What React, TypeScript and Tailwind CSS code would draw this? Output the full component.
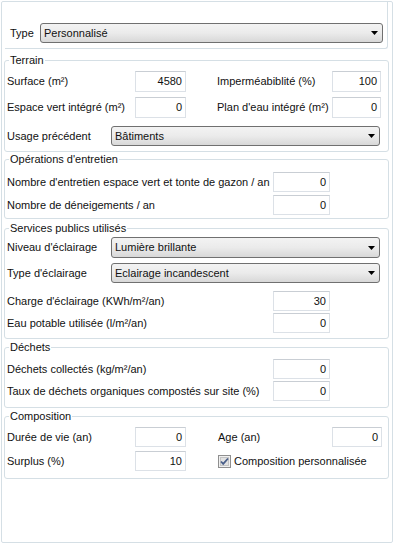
import type { ReactNode } from 'react';

const font = { fontFamily: '"Liberation Sans", Arial, sans-serif' };

function Field({ value, w }: { value: string; w: string }) {
  return (
    <div
      className={`${w} flex h-full items-center justify-end border border-[#dce1e7] border-t-[#c9ced4] bg-white pr-[3px]`}
    >
      {value}
    </div>
  );
}

function Select({ value, w, h }: { value: string; w: string; h: string }) {
  return (
    <div
      className={`${w} ${h} flex items-center justify-between rounded-[3px] border border-[#707070] bg-gradient-to-b from-[#f3f3f3] via-[#ebebeb] to-[#d8d8d8] pl-[3px] pr-[4px]`}
    >
      <span>{value}</span>
      <svg width="7" height="4" viewBox="0 0 7 4">
        <path d="M0 0h7L3.5 4z" fill="#000" />
      </svg>
    </div>
  );
}

function Group({ title, className, children }: { title: string; className: string; children: ReactNode }) {
  return (
    <fieldset className={`ml-[2px] w-[385px] rounded-[3px] border border-[#d5dfe5] ${className}`}>
      <legend className="ml-[4px] px-[1px] leading-[13px]">{title}</legend>
      <div className="flex flex-col pl-[2px]">{children}</div>
    </fieldset>
  );
}

function Checkbox() {
  return (
    <svg width="13" height="13" viewBox="0 0 13 13">
      <rect x="0.5" y="0.5" width="12" height="12" fill="#f0f0f0" stroke="#8f8f8f" />
      <rect x="2.5" y="2.5" width="8" height="8" fill="#e2e2e2" stroke="#c4c4c4" />
      <path d="M3 6.5l2.2 2.4L10 3.5" fill="none" stroke="#4a5f8a" strokeWidth="1.8" />
    </svg>
  );
}

export default function App() {
  return (
    <div className="pl-[1px] pt-[1px] text-[11px] leading-[13px] text-[#111]" style={font}>
      <div className="h-[542px] w-[392px] rounded-[2px] border border-[#d5dfe5] bg-white">
        <div className="ml-[3px] flex h-[47px] w-[383px] items-start rounded-br-[3px] border-r border-b border-[#d5dfe5] pt-[21px]">
          <span className="ml-[5px] flex h-[20px] w-[30px] items-center">Type</span>
          <Select value="Personnalisé" w="w-[343px]" h="h-[20px]" />
        </div>

        <Group title="Terrain" className="mt-[5px] pb-[5px]">
          <div className="mt-[4px] flex h-[21px] items-center">
            <span className="w-[128px]">Surface (m²)</span>
            <Field value="4580" w="w-[51px]" />
            <span className="ml-[31px] w-[115px]">Imperméabiblité (%)</span>
            <Field value="100" w="w-[49px]" />
          </div>
          <div className="mt-[5px] flex h-[21px] items-center">
            <span className="w-[128px]">Espace vert intégré (m²)</span>
            <Field value="0" w="w-[51px]" />
            <span className="ml-[31px] w-[115px]">Plan d'eau intégré (m²)</span>
            <Field value="0" w="w-[49px]" />
          </div>
          <div className="mt-[8px] flex h-[20px] items-center">
            <span className="w-[104px]">Usage précédent</span>
            <Select value="Bâtiments" w="w-[269px]" h="h-[20px]" />
          </div>
        </Group>

        <Group title="Opérations d'entretien" className="mt-[1px] pb-[3px]">
          <div className="mt-[6px] flex h-[20px] items-center">
            <span className="w-[266px]">Nombre d'entretien espace vert et tonte de gazon / an</span>
            <Field value="0" w="w-[57px]" />
          </div>
          <div className="mt-[3px] flex h-[20px] items-center">
            <span className="w-[266px]">Nombre de déneigements / an</span>
            <Field value="0" w="w-[57px]" />
          </div>
        </Group>

        <Group title="Services publics utilisés" className="mt-[3px] pb-[5px]">
          <div className="mt-[2px] flex h-[21px] items-center">
            <span className="w-[104px]">Niveau d'éclairage</span>
            <Select value="Lumière brillante" w="w-[269px]" h="h-[21px]" />
          </div>
          <div className="mt-[5px] flex h-[20px] items-center">
            <span className="w-[104px]">Type d'éclairage</span>
            <Select value="Eclairage incandescent" w="w-[269px]" h="h-[20px]" />
          </div>
          <div className="mt-[8px] flex h-[20px] items-center">
            <span className="w-[266px]">Charge d'éclairage (KWh/m²/an)</span>
            <Field value="30" w="w-[57px]" />
          </div>
          <div className="mt-[2px] flex h-[20px] items-center">
            <span className="w-[266px]">Eau potable utilisée (l/m²/an)</span>
            <Field value="0" w="w-[57px]" />
          </div>
        </Group>

        <Group title="Déchets" className="mt-[2px] pb-[6px]">
          <div className="mt-[5px] flex h-[20px] items-center">
            <span className="w-[266px]">Déchets collectés (kg/m²/an)</span>
            <Field value="0" w="w-[57px]" />
          </div>
          <div className="mt-[2px] flex h-[20px] items-center">
            <span className="w-[266px]">Taux de déchets organiques compostés sur site (%)</span>
            <Field value="0" w="w-[57px]" />
          </div>
        </Group>

        <Group title="Composition" className="mt-[2px] pb-[7px]">
          <div className="mt-[4px] flex h-[20px] items-center">
            <span className="w-[128px]">Durée de vie (an)</span>
            <Field value="0" w="w-[51px]" />
            <span className="ml-[32px] w-[114px]">Age (an)</span>
            <Field value="0" w="w-[50px]" />
          </div>
          <div className="mt-[4px] flex h-[20px] items-center">
            <span className="w-[128px]">Surplus (%)</span>
            <Field value="10" w="w-[51px]" />
            <span className="ml-[32px] flex items-center gap-[3px]">
              <Checkbox />
              Composition personnalisée
            </span>
          </div>
        </Group>
      </div>
    </div>
  );
}
